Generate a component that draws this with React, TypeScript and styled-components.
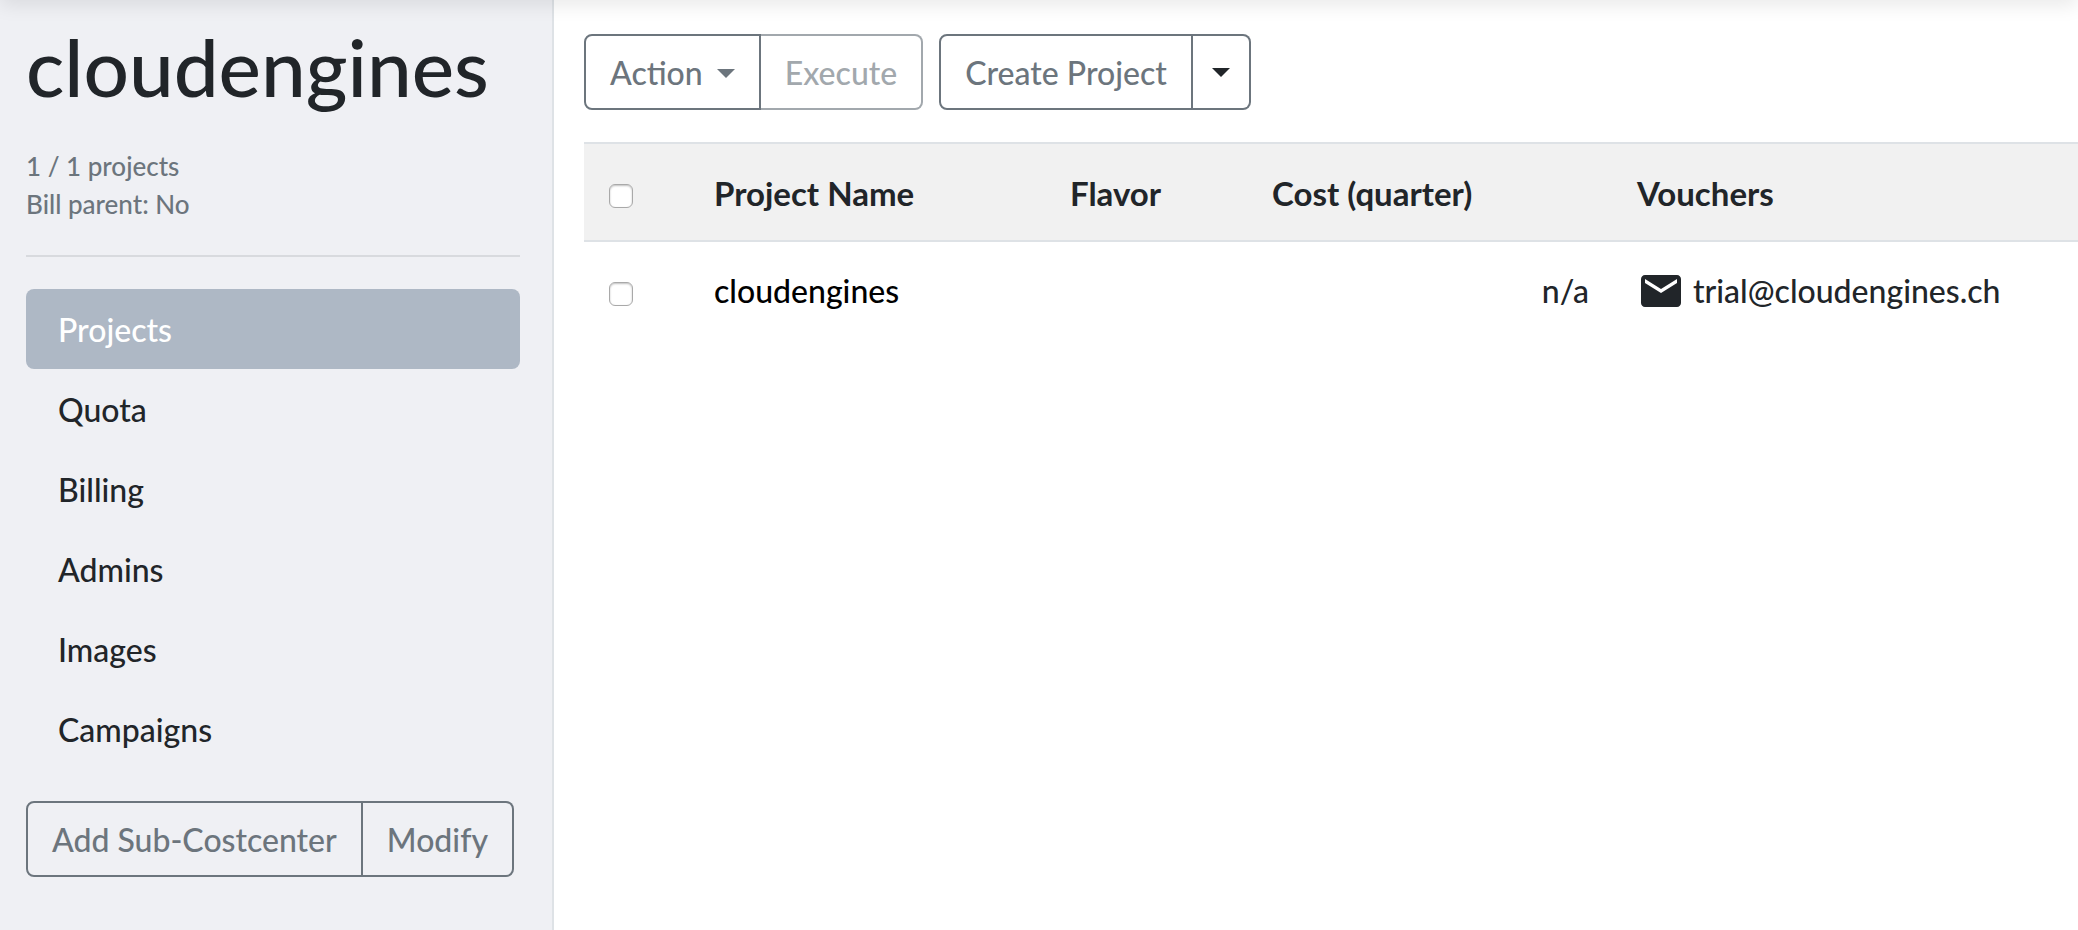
import React from "react";
import styled, { createGlobalStyle, css } from "styled-components";

const GlobalStyle = createGlobalStyle`
  *, *::before, *::after { box-sizing: border-box; }
  body {
    margin: 0;
    background: #fff;
    color: #212529;
    font: 500 32px/48px Lato, "Liberation Sans", sans-serif;
    overflow-x: hidden;
  }
`;

const Page = styled.div`
  display: flex;
  min-height: 100vh;
`;

const TopShadow = styled.div`
  position: fixed;
  top: -20px;
  left: 0;
  right: 0;
  height: 20px;
  box-shadow: 0 4px 20px rgba(0, 0, 0, 0.1);
  pointer-events: none;
`;

const Sidebar = styled.aside`
  flex: 0 0 554px;
  padding: 18px 32px 32px 26px;
  background: #eff0f4;
  border-right: 2px solid #dee2e6;
`;

const Title = styled.h1`
  margin: 0 0 33px;
  font-size: 80px;
  font-weight: 500;
  line-height: 96px;
`;

const Summary = styled.p`
  margin: 0;
  color: #6c757d;
  font-size: 26px;
  line-height: 38px;
`;

const Divider = styled.hr`
  margin: 32px 0;
  border: 0;
  border-top: 2px solid #d8dade;
`;

const Nav = styled.nav`
  display: flex;
  flex-direction: column;
  margin-bottom: 32px;
`;

const NavLink = styled.a<{ $active?: boolean }>`
  padding: 17px 32px 15px;
  border-radius: 8px;
  color: ${(p) => (p.$active ? "#fff" : "#212529")};
  background: ${(p) => (p.$active ? "#aeb8c5" : "transparent")};
  text-decoration: none;
`;

const ButtonGroup = styled.div`
  display: inline-flex;
`;

const Button = styled.button<{ $dark?: boolean }>`
  display: inline-flex;
  align-items: center;
  gap: 14px;
  height: 76px;
  padding: 2px 24px 0;
  border: 2px solid #6c757d;
  background: transparent;
  color: ${(p) => (p.$dark ? "#212529" : "#6c757d")};
  font: inherit;
  white-space: nowrap;

  &:first-child { border-radius: 8px 0 0 8px; }
  &:last-child { border-radius: 0 8px 8px 0; }
  & + & { border-left: 0; }
  &:disabled { border-color: #a2a8ad; color: #a2a8ad; }
`;

const CompactButton = styled(Button)`
  padding: 0 19px;
`;

const Caret = styled.span`
  border: 9px solid transparent;
  border-top-color: currentColor;
  border-bottom: 0;
`;

const Main = styled.main`
  flex: 1;
  min-width: 0;
  padding: 34px 0 0 30px;
`;

const Toolbar = styled.div`
  display: flex;
  gap: 16px;
  margin-bottom: 32px;
`;

const Table = styled.table`
  width: 100%;
  table-layout: fixed;
  border-spacing: 0;
`;

const Col = styled.col<{ $width?: number }>`
  ${(p) => p.$width && css`width: ${p.$width}px;`}
`;

const HeadCell = styled.th`
  padding: 25px 24px 23px;
  border: solid #dee2e6;
  border-width: 2px 0;
  background: #f1f1f1;
  font-size: 33px;
  font-weight: 700;
  text-align: left;
`;

const Cell = styled.td<{ $right?: boolean }>`
  padding: 25px 24px 23px;
  text-align: ${(p) => (p.$right ? "right" : "left")};
  white-space: nowrap;
`;

const Checkbox = styled.input`
  appearance: none;
  display: block;
  width: 24px;
  height: 24px;
  margin: 6px 1px 0;
  border: 1px solid #a9a9a9;
  border-radius: 6px;
  background: #fff;
  box-shadow: inset 0 1px 2px rgba(0, 0, 0, 0.25);

  &:checked { background: #6c757d; }
`;

const ProjectLink = styled.a`
  color: #000;
  text-decoration: none;
`;

const Voucher = styled.span`
  display: flex;
  align-items: center;
  gap: 8px;
`;

const MailIcon = () => (
  <svg width="48" height="48" viewBox="0 0 24 24" fill="currentColor" aria-hidden="true">
    <path d="M20 4H4c-1.100 0-1.990.9-1.990 2L2 18c0 1.100.9 2 2 2h16c1.100 0 2-.9 2-2V6c0-1.100-.9-2-2-2zm0 4l-8 5-8-5V6l8 5 8-5v2z" />
  </svg>
);

const sections = ["Projects", "Quota", "Billing", "Admins", "Images", "Campaigns"];

export default function App() {
  return (
    <>
      <GlobalStyle />
      <Page>
        <Sidebar>
          <Title>cloudengines</Title>
          <Summary>1 / 1 projects</Summary>
          <Summary>Bill parent: No</Summary>
          <Divider />
          <Nav>
            {sections.map((name, i) => (
              <NavLink key={name} href={`#${name.toLowerCase()}`} $active={i === 0}>
                {name}
              </NavLink>
            ))}
          </Nav>
          <ButtonGroup>
            <Button type="button">Add Sub-Costcenter</Button>
            <Button type="button">Modify</Button>
          </ButtonGroup>
        </Sidebar>
        <Main>
          <Toolbar>
            <ButtonGroup>
              <Button type="button" aria-haspopup="menu">
                Action
                <Caret />
              </Button>
              <Button type="button" disabled>Execute</Button>
            </ButtonGroup>
            <ButtonGroup>
              <Button type="button">Create Project</Button>
              <CompactButton type="button" $dark aria-label="More create options">
                <Caret />
              </CompactButton>
            </ButtonGroup>
          </Toolbar>
          <Table>
            <colgroup>
              <Col $width={106} />
              <Col $width={356} />
              <Col $width={202} />
              <Col $width={365} />
              <Col />
            </colgroup>
            <thead>
              <tr>
                <HeadCell><Checkbox type="checkbox" aria-label="Select all projects" /></HeadCell>
                <HeadCell>Project Name</HeadCell>
                <HeadCell>Flavor</HeadCell>
                <HeadCell>Cost (quarter)</HeadCell>
                <HeadCell>Vouchers</HeadCell>
              </tr>
            </thead>
            <tbody>
              <tr>
                <Cell><Checkbox type="checkbox" aria-label="Select cloudengines" /></Cell>
                <Cell><ProjectLink href="#cloudengines">cloudengines</ProjectLink></Cell>
                <Cell />
                <Cell $right>n/a</Cell>
                <Cell><Voucher><MailIcon />trial@cloudengines.ch</Voucher></Cell>
              </tr>
            </tbody>
          </Table>
        </Main>
      </Page>
      <TopShadow />
    </>
  );
}
